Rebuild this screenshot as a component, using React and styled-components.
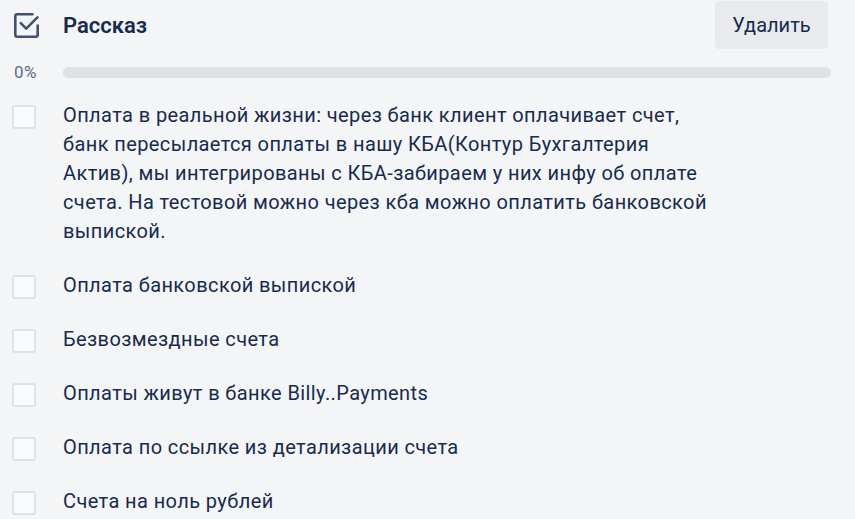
import React from 'react'
import styled, { createGlobalStyle } from 'styled-components'

const GlobalStyle = createGlobalStyle`
  html, body {
    margin: 0;
    padding: 0;
    background: #f4f5f7;
  }
  body {
    font-family: 'Segoe UI', Roboto, 'Noto Sans', sans-serif;
    color: #172b4d;
  }
`

const items = [
  [
    'Оплата в реальной жизни: через банк клиент оплачивает счет,',
    'банк пересылается оплаты в нашу КБА(Контур Бухгалтерия',
    'Актив), мы интегрированы с КБА-забираем у них инфу об оплате',
    'счета. На тестовой можно через кба можно оплатить банковской',
    'выпиской.',
  ],
  ['Оплата банковской выпиской'],
  ['Безвозмездные счета'],
  ['Оплаты живут в банке Billy..Payments'],
  ['Оплата по ссылке из детализации счета'],
  ['Счета на ноль рублей'],
]

export default function App() {
  const percent = 0
  return (
    <>
      <GlobalStyle />
      <Checklist>
        <Header>
          <IconCell>
            <svg width="28" height="28" viewBox="0 0 28 28" fill="none">
              <path
                d="M20.5 3.3H5.3a2 2 0 0 0-2 2v18.4a2 2 0 0 0 2 2h18.4a2 2 0 0 0 2-2V14.5"
                stroke="#42526e"
                strokeWidth="2.6"
                strokeLinecap="round"
              />
              <path
                d="M8.8 12.2l5.4 5.4L25.4 6.3"
                stroke="#42526e"
                strokeWidth="2.6"
                strokeLinecap="round"
                strokeLinejoin="round"
              />
            </svg>
          </IconCell>
          <TitleRow>
            <Title>Рассказ</Title>
            <DeleteButton>Удалить</DeleteButton>
          </TitleRow>
        </Header>

        <Progress>
          <Percent>{percent}%</Percent>
          <Bar>
            <BarFill style={{ width: `${percent}%` }} />
          </Bar>
        </Progress>

        <List>
          {items.map((lines, i) => (
            <Item key={i}>
              <CheckCell>
                <Box />
              </CheckCell>
              <ItemText>
                {lines.map((l, j) => (
                  <React.Fragment key={j}>
                    {l}
                    {j < lines.length - 1 && <br />}
                  </React.Fragment>
                ))}
              </ItemText>
            </Item>
          ))}
        </List>
      </Checklist>
    </>
  )
}

const Checklist = styled.div`
  padding: 0 24px 0 12px;
`

const Header = styled.div`
  display: grid;
  grid-template-columns: 51px 1fr;
  align-items: center;
  height: 50px;
`

const IconCell = styled.div`
  display: flex;
  align-items: center;
`

const TitleRow = styled.div`
  display: flex;
  align-items: center;
  justify-content: space-between;
`

const Title = styled.h3`
  margin: 0;
  font-size: 22px;
  font-weight: 600;
  line-height: 29px;
  color: #172b4d;
`

const DeleteButton = styled.button`
  width: 113px;
  height: 48px;
  margin-right: 3px;
  border: none;
  border-radius: 4px;
  background: #e9eaee;
  color: #172b4d;
  font-family: inherit;
  font-size: 20px;
`

const Progress = styled.div`
  display: grid;
  grid-template-columns: 51px 1fr;
  grid-template-rows: 11px;
  align-items: center;
  margin-top: 17px;
`

const Percent = styled.span`
  font-size: 17px;
  line-height: 11px;
  letter-spacing: 0.5px;
  color: #5e6c84;
  padding-left: 2px;
`

const Bar = styled.div`
  height: 11px;
  border-radius: 6px;
  background: #dfe1e6;
  overflow: hidden;
`

const BarFill = styled.div`
  height: 100%;
  background: #5aac44;
`

const List = styled.div`
  margin-top: 11px;
`

const Item = styled.div`
  display: grid;
  grid-template-columns: 51px 1fr;
  padding: 12px 0 13px;
`

const CheckCell = styled.div`
  padding-top: 4px;
`

const Box = styled.div`
  box-sizing: border-box;
  width: 24px;
  height: 24px;
  border: 2px solid #dfe1e6;
  border-radius: 3px;
  background: #fafbfc;
`

const ItemText = styled.div`
  font-size: 20px;
  line-height: 29px;
  letter-spacing: 0.4px;
  color: #172b4d;
`
